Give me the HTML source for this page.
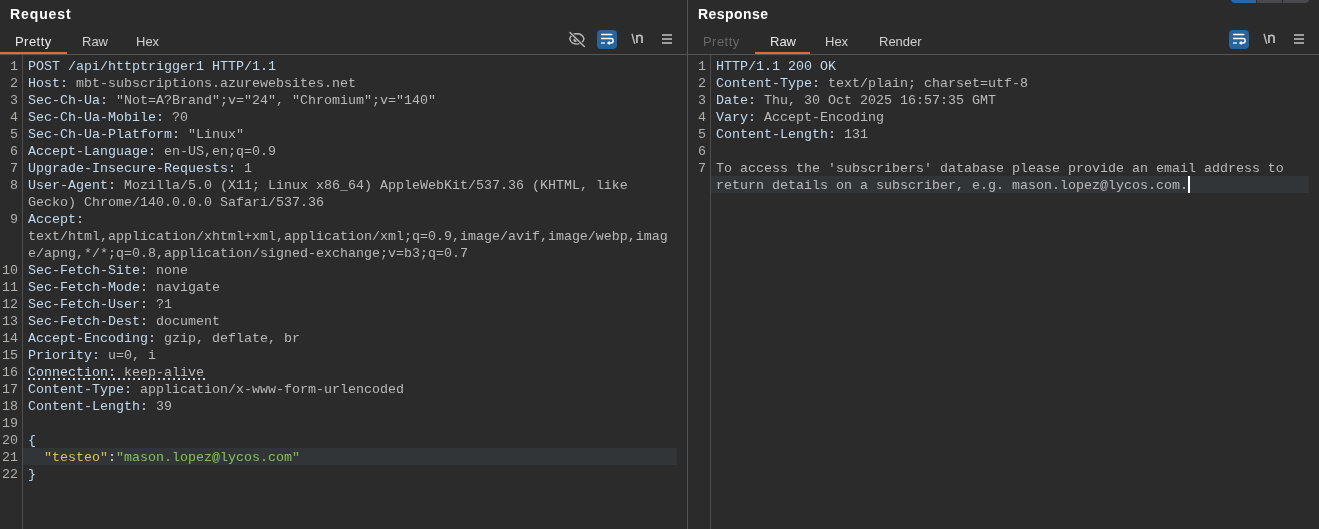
<!DOCTYPE html>
<html><head><meta charset="utf-8">
<style>
*{margin:0;padding:0;box-sizing:border-box}
html,body{width:1319px;height:529px;overflow:hidden;background:#2b2b2b}
.layer{position:absolute;left:0;top:0;width:1319px;height:529px;will-change:transform}
body{position:relative;font-family:"Liberation Sans",sans-serif}
.abs{position:absolute}
.title{position:absolute;top:5px;letter-spacing:0.75px;font-weight:bold;font-size:14px;color:#ffffff;line-height:18px}
.tab{position:absolute;top:34px;font-size:13px;color:#d0d0d0;line-height:16px}
.tab.dis{color:#676767}
.sep{position:absolute;top:54px;height:1px;background:#555555}
.ul{position:absolute;top:52px;height:2px;background:#e46a32}
.divider{position:absolute;left:687px;top:0;width:1px;height:529px;background:#555555}
.gutter{position:absolute;top:55px;width:1px;height:474px;background:#4e4e4e}
.code{position:absolute;font-family:"Liberation Mono",monospace;font-size:13.333px;line-height:17px;white-space:pre}
.ln{position:absolute;font-family:"Liberation Mono",monospace;font-size:13.333px;line-height:17px;white-space:pre;color:#b0b0ad;text-align:right}
.k{color:#c2d8ec}
.v{color:#b9b9b9}
.jk{color:#e8bb5d}
.js{color:#83c15a}
.hl{position:absolute;height:17px;background:#323538}
.btn{position:absolute;top:30px;width:20px;height:19px;border-radius:4px;background:#27649e}
</style></head><body><div class="layer">
<!-- LEFT PANEL -->
<div class="title" style="left:10px;letter-spacing:0.9px">Request</div>
<div class="tab" style="left:15px;color:#e8e8e8;letter-spacing:0.45px">Pretty</div>
<div class="tab" style="left:82px">Raw</div>
<div class="tab" style="left:136px">Hex</div>
<div class="ul" style="left:0;width:67px"></div>
<div class="sep" style="left:0;width:687px"></div>


<svg class="abs" style="left:566px;top:29px" width="22" height="21" viewBox="0 0 22 21">
  <path d="M3.7 9.9 C5.5 3 16.2 3 18 9.9 C16.2 16.8 5.5 16.8 3.7 9.9 Z" fill="none" stroke="#bdbdbd" stroke-width="1.4"/>
  <circle cx="9.4" cy="11" r="2" fill="#bdbdbd"/>
  <line x1="4" y1="3.4" x2="18.3" y2="17.5" stroke="#2b2b2b" stroke-width="3"/>
  <line x1="4" y1="3.4" x2="18.3" y2="17.5" stroke="#bdbdbd" stroke-width="1.4" stroke-linecap="round"/>
</svg>
<div class="btn" style="left:597px"></div>
<svg class="abs" style="left:597px;top:30px" width="20" height="19" viewBox="0 0 20 19">
  <line x1="4" y1="4.5" x2="15.3" y2="4.5" stroke="#fff" stroke-width="1.5"/>
  <path d="M4 8.6 H14 A2.15 2.15 0 0 1 14 12.9 H12" fill="none" stroke="#fff" stroke-width="1.5"/>
  <path d="M9.8 12.9 L12.6 10.7 L12.6 15.1 Z" fill="#fff"/>
  <line x1="4" y1="13" x2="7.9" y2="13" stroke="#fff" stroke-opacity="0.75" stroke-width="1.7"/>
</svg>
<svg class="abs" style="left:629px;top:31px" width="16" height="16" viewBox="0 0 16 16">
  <line x1="3.1" y1="3.3" x2="5.6" y2="12.3" stroke="#bababa" stroke-width="1.4" stroke-linecap="round"/>
  <path d="M7.9 12.1 V3.9 M7.9 5.6 Q8.6 4.4 10.5 4.4 Q13 4.4 13 6.2 V12.1" fill="none" stroke="#bababa" stroke-width="1.8"/>
</svg>
<div class="abs" style="left:662px;top:34px;width:10px;height:2px;background:#9d9d9d"></div>
<div class="abs" style="left:662px;top:38px;width:10px;height:2px;background:#9d9d9d"></div>
<div class="abs" style="left:662px;top:42px;width:10px;height:2px;background:#9d9d9d"></div>

<div class="divider"></div>

<!-- RIGHT PANEL -->
<div class="title" style="left:698px;letter-spacing:0.45px">Response</div>
<div class="tab dis" style="left:703px;letter-spacing:0.45px">Pretty</div>
<div class="tab" style="left:770px;color:#e8e8e8">Raw</div>
<div class="tab" style="left:825px">Hex</div>
<div class="tab" style="left:879px">Render</div>
<div class="ul" style="left:755px;width:55px"></div>
<div class="sep" style="left:688px;width:631px"></div>

<div class="btn" style="left:1229px"></div>
<svg class="abs" style="left:1229px;top:30px" width="20" height="19" viewBox="0 0 20 19">
  <line x1="4" y1="4.5" x2="15.3" y2="4.5" stroke="#fff" stroke-width="1.5"/>
  <path d="M4 8.6 H14 A2.15 2.15 0 0 1 14 12.9 H12" fill="none" stroke="#fff" stroke-width="1.5"/>
  <path d="M9.8 12.9 L12.6 10.7 L12.6 15.1 Z" fill="#fff"/>
  <line x1="4" y1="13" x2="7.9" y2="13" stroke="#fff" stroke-opacity="0.75" stroke-width="1.7"/>
</svg>
<svg class="abs" style="left:1261px;top:31px" width="16" height="16" viewBox="0 0 16 16">
  <line x1="3.1" y1="3.3" x2="5.6" y2="12.3" stroke="#bababa" stroke-width="1.4" stroke-linecap="round"/>
  <path d="M7.9 12.1 V3.9 M7.9 5.6 Q8.6 4.4 10.5 4.4 Q13 4.4 13 6.2 V12.1" fill="none" stroke="#bababa" stroke-width="1.8"/>
</svg>
<div class="abs" style="left:1294px;top:34px;width:10px;height:2px;background:#9d9d9d"></div>
<div class="abs" style="left:1294px;top:38px;width:10px;height:2px;background:#9d9d9d"></div>
<div class="abs" style="left:1294px;top:42px;width:10px;height:2px;background:#9d9d9d"></div>

<div class="abs" style="left:1231px;top:-4px;width:25px;height:7px;background:#2a65a5;border-radius:0 0 0 4px"></div>
<div class="abs" style="left:1257px;top:-4px;width:25px;height:7px;background:#4a4a4c"></div>
<div class="abs" style="left:1283px;top:-4px;width:26px;height:7px;background:#4a4a4c;border-radius:0 0 4px 0"></div>
<div class="abs" style="left:28px;top:378px;width:177px;height:2px;background-image:linear-gradient(to right,#c6dcef 2px,transparent 2px);background-size:5px 2px"></div>

<div class="gutter" style="left:22px"></div>
<div class="gutter" style="left:710px"></div>

<div class="hl" style="left:23px;top:448px;width:654px"></div>
<div class="hl" style="left:711px;top:176px;width:598px"></div>

<div class="ln" style="left:0;top:58px;width:18px">1
2
3
4
5
6
7
8

9


10
11
12
13
14
15
16
17
18
19
20
21
22</div>

<div class="code" style="left:28px;top:58px"><span class="k">POST /api/httptrigger1 HTTP/1.1</span>
<span class="k">Host:</span><span class="v"> mbt-subscriptions.azurewebsites.net</span>
<span class="k">Sec-Ch-Ua:</span><span class="v"> "Not=A?Brand";v="24", "Chromium";v="140"</span>
<span class="k">Sec-Ch-Ua-Mobile:</span><span class="v"> ?0</span>
<span class="k">Sec-Ch-Ua-Platform:</span><span class="v"> "Linux"</span>
<span class="k">Accept-Language:</span><span class="v"> en-US,en;q=0.9</span>
<span class="k">Upgrade-Insecure-Requests:</span><span class="v"> 1</span>
<span class="k">User-Agent:</span><span class="v"> Mozilla/5.0 (X11; Linux x86_64) AppleWebKit/537.36 (KHTML, like</span>
<span class="v">Gecko) Chrome/140.0.0.0 Safari/537.36</span>
<span class="k">Accept:</span>
<span class="v">text/html,application/xhtml+xml,application/xml;q=0.9,image/avif,image/webp,imag</span>
<span class="v">e/apng,*/*;q=0.8,application/signed-exchange;v=b3;q=0.7</span>
<span class="k">Sec-Fetch-Site:</span><span class="v"> none</span>
<span class="k">Sec-Fetch-Mode:</span><span class="v"> navigate</span>
<span class="k">Sec-Fetch-User:</span><span class="v"> ?1</span>
<span class="k">Sec-Fetch-Dest:</span><span class="v"> document</span>
<span class="k">Accept-Encoding:</span><span class="v"> gzip, deflate, br</span>
<span class="k">Priority:</span><span class="v"> u=0, i</span>
<span class="k">Connection:</span><span class="v"> keep-alive</span>
<span class="k">Content-Type:</span><span class="v"> application/x-www-form-urlencoded</span>
<span class="k">Content-Length:</span><span class="v"> 39</span>

<span class="k">{</span>
  <span class="jk">"testeo"</span><span style="color:#e0e0e0">:</span><span class="js">"mason.lopez@lycos.com"</span>
<span class="k">}</span></div>

<div class="ln" style="left:688px;top:58px;width:18px">1
2
3
4
5
6
7</div>

<div class="code" style="left:716px;top:58px"><span class="k">HTTP/1.1 200 OK</span>
<span class="k">Content-Type:</span><span class="v"> text/plain; charset=utf-8</span>
<span class="k">Date:</span><span class="v"> Thu, 30 Oct 2025 16:57:35 GMT</span>
<span class="k">Vary:</span><span class="v"> Accept-Encoding</span>
<span class="k">Content-Length:</span><span class="v"> 131</span>

<span class="v">To access the 'subscribers' database please provide an email address to</span>
<span class="v">return details on a subscriber, e.g. mason.lopez@lycos.com.</span></div>

<div class="abs" style="left:1188px;top:176px;width:2px;height:17px;background:#ffffff"></div>
</div></body></html>
